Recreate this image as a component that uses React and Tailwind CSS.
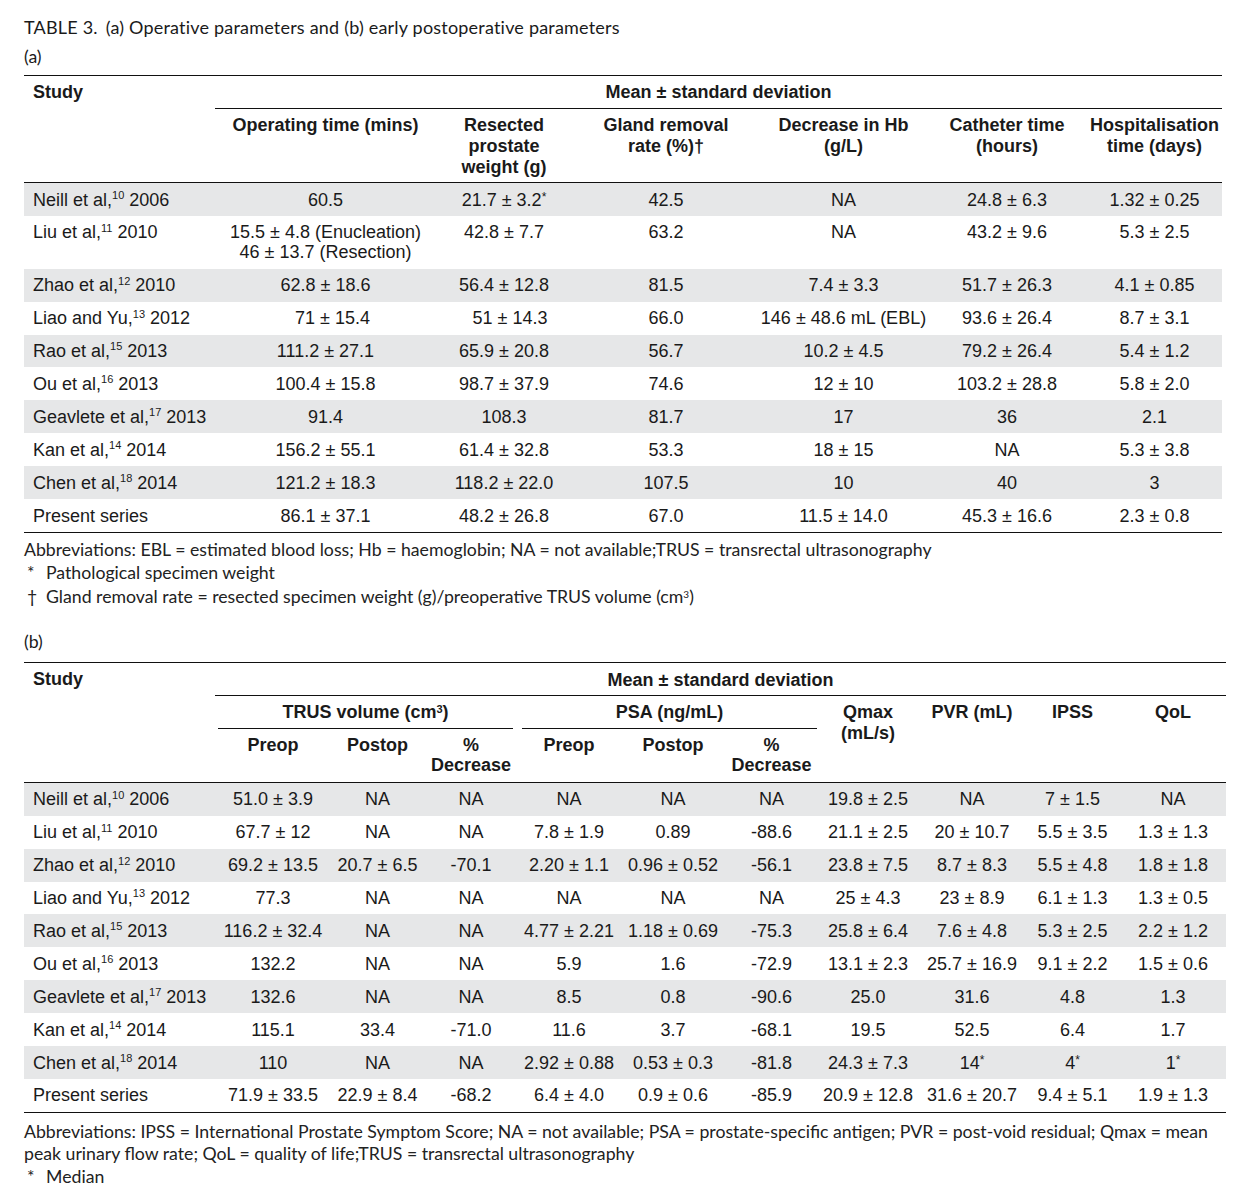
import React from "react";

const cellFont = { fontFamily: '"Liberation Sans", Arial, sans-serif' };
const noteFont = { fontFamily: 'Lato, "Open Sans", sans-serif' };

const Sup = ({ children }) => (
  <sup className="text-[11px] top-[-0.6em]">{children}</sup>
);

const Study = ({ name, ref_, year }) => (
  <span>
    {name}
    {ref_ ? <Sup>{ref_}</Sup> : null}
    {year}
  </span>
);

const rowsA = [
  ["Neill et al,", "10", " 2006", "60.5", "21.7 ± 3.2*", "42.5", "NA", "24.8 ± 6.3", "1.32 ± 0.25"],
  ["Liu et al,", "11", " 2010", ["15.5 ± 4.8 (Enucleation)", "46 ± 13.7 (Resection)"], "42.8 ± 7.7", "63.2", "NA", "43.2 ± 9.6", "5.3 ± 2.5"],
  ["Zhao et al,", "12", " 2010", "62.8 ± 18.6", "56.4 ± 12.8", "81.5", "7.4 ± 3.3", "51.7 ± 26.3", "4.1 ± 0.85"],
  ["Liao and Yu,", "13", " 2012", { v: "71 ± 15.4", s: "pl-[14px]" }, { v: "51 ± 14.3", s: "pl-[12px]" }, "66.0", "146 ± 48.6 mL (EBL)", "93.6 ± 26.4", "8.7 ± 3.1"],
  ["Rao et al,", "15", " 2013", "111.2 ± 27.1", "65.9 ± 20.8", "56.7", "10.2 ± 4.5", "79.2 ± 26.4", "5.4 ± 1.2"],
  ["Ou et al,", "16", " 2013", "100.4 ± 15.8", "98.7 ± 37.9", "74.6", "12 ± 10", "103.2 ± 28.8", "5.8 ± 2.0"],
  ["Geavlete et al,", "17", " 2013", "91.4", "108.3", "81.7", "17", "36", "2.1"],
  ["Kan et al,", "14", " 2014", "156.2 ± 55.1", "61.4 ± 32.8", "53.3", "18 ± 15", "NA", "5.3 ± 3.8"],
  ["Chen et al,", "18", " 2014", "121.2 ± 18.3", "118.2 ± 22.0", "107.5", "10", "40", "3"],
  ["Present series", "", "", "86.1 ± 37.1", "48.2 ± 26.8", "67.0", "11.5 ± 14.0", "45.3 ± 16.6", "2.3 ± 0.8"],
];

const rowsB = [
  ["Neill et al,", "10", " 2006", "51.0 ± 3.9", "NA", "NA", "NA", "NA", "NA", "19.8 ± 2.5", "NA", "7 ± 1.5", "NA"],
  ["Liu et al,", "11", " 2010", "67.7 ± 12", "NA", "NA", "7.8 ± 1.9", "0.89", "-88.6", "21.1 ± 2.5", "20 ± 10.7", "5.5 ± 3.5", "1.3 ± 1.3"],
  ["Zhao et al,", "12", " 2010", "69.2 ± 13.5", "20.7 ± 6.5", "-70.1", "2.20 ± 1.1", "0.96 ± 0.52", "-56.1", "23.8 ± 7.5", "8.7 ± 8.3", "5.5 ± 4.8", "1.8 ± 1.8"],
  ["Liao and Yu,", "13", " 2012", "77.3", "NA", "NA", "NA", "NA", "NA", "25 ± 4.3", "23 ± 8.9", "6.1 ± 1.3", "1.3 ± 0.5"],
  ["Rao et al,", "15", " 2013", "116.2 ± 32.4", "NA", "NA", "4.77 ± 2.21", "1.18 ± 0.69", "-75.3", "25.8 ± 6.4", "7.6 ± 4.8", "5.3 ± 2.5", "2.2 ± 1.2"],
  ["Ou et al,", "16", " 2013", "132.2", "NA", "NA", "5.9", "1.6", "-72.9", "13.1 ± 2.3", "25.7 ± 16.9", "9.1 ± 2.2", "1.5 ± 0.6"],
  ["Geavlete et al,", "17", " 2013", "132.6", "NA", "NA", "8.5", "0.8", "-90.6", "25.0", "31.6", "4.8", "1.3"],
  ["Kan et al,", "14", " 2014", "115.1", "33.4", "-71.0", "11.6", "3.7", "-68.1", "19.5", "52.5", "6.4", "1.7"],
  ["Chen et al,", "18", " 2014", "110", "NA", "NA", "2.92 ± 0.88", "0.53 ± 0.3", "-81.8", "24.3 ± 7.3", "14*", "4*", "1*"],
  ["Present series", "", "", "71.9 ± 33.5", "22.9 ± 8.4", "-68.2", "6.4 ± 4.0", "0.9 ± 0.6", "-85.9", "20.9 ± 12.8", "31.6 ± 20.7", "9.4 ± 5.1", "1.9 ± 1.3"],
];

function Val({ v }) {
  if (Array.isArray(v)) {
    return (
      <>
        {v.map((l, i) => (
          <div key={i}>{l}</div>
        ))}
      </>
    );
  }
  if (typeof v === "string" && v.endsWith("*")) {
    return (
      <span>
        {v.slice(0, -1)}
        <sup className="text-[12px] top-[-0.4em]">*</sup>
      </span>
    );
  }
  return <span>{v}</span>;
}

function BodyRows({ rows }) {
  return rows.map((r, i) => {
    const gray = i % 2 === 0;
    const last = i === rows.length - 1;
    return (
      <tr
        key={i}
        className={
          (gray ? "bg-[#e6e7e8] " : "") + (last ? "border-b border-[#111]" : "")
        }
      >
        <td className="pl-[9px] pt-[6.5px] pb-[6.4px] text-left align-top whitespace-nowrap">
          <Study name={r[0]} ref_={r[1]} year={r[2]} />
        </td>
        {r.slice(3).map((c, j) => {
          const obj = c && typeof c === "object" && !Array.isArray(c);
          const v = obj ? c.v : c;
          const extra = obj ? " " + c.s : "";
          return (
            <td
              key={j}
              className={
                "pt-[6.5px] pb-[6.4px] text-center align-top whitespace-nowrap" + extra
              }
            >
              <Val v={v} />
            </td>
          );
        })}
      </tr>
    );
  });
}

export default function App() {
  return (
    <div className="bg-white w-[1250px] min-h-[1194px] text-[#1a1a1a] pt-[15px] pl-[24px]">
      <div style={noteFont} className="text-[18px] leading-[24px] tracking-[0.2px]">
        TABLE 3.<span className="inline-block w-[8px]"></span>(a) Operative parameters and (b) early postoperative parameters
      </div>
      <div style={noteFont} className="text-[17.7px] leading-[24px] mt-[6px]">
        (a)
      </div>

      <table
        style={cellFont}
        className="table-fixed border-collapse w-[1198px] mt-[6px] text-[18px] leading-[20px]"
      >
        <colgroup>
          <col className="w-[191px]" />
          <col className="w-[221px]" />
          <col className="w-[136px]" />
          <col className="w-[188px]" />
          <col className="w-[167px]" />
          <col className="w-[160px]" />
          <col className="w-[135px]" />
        </colgroup>
        <thead>
          <tr className="border-t border-[#111]">
            <th rowSpan={2} className="pl-[9px] pt-[6px] text-left align-top font-bold">
              Study
            </th>
            <th colSpan={6} className="h-[33px] text-center font-bold border-b border-[#111] align-middle">
              Mean ± standard deviation
            </th>
          </tr>
          <tr className="border-b border-[#111]">
            <th className="pt-[6px] pb-[4px] h-[73px] align-top font-bold leading-[21px]">Operating time (mins)</th>
            <th className="pt-[6px] pb-[4px] align-top font-bold leading-[21px]">
              Resected
              <br />
              prostate
              <br />
              weight (g)
            </th>
            <th className="pt-[6px] pb-[4px] align-top font-bold leading-[21px]">
              Gland removal
              <br />
              rate (%)†
            </th>
            <th className="pt-[6px] pb-[4px] align-top font-bold leading-[21px]">
              Decrease in Hb
              <br />
              (g/L)
            </th>
            <th className="pt-[6px] pb-[4px] align-top font-bold leading-[21px]">
              Catheter time
              <br />
              (hours)
            </th>
            <th className="pt-[6px] pb-[4px] align-top font-bold leading-[21px] whitespace-nowrap">
              Hospitalisation
              <br />
              time (days)
            </th>
          </tr>
        </thead>
        <tbody>
          <BodyRows rows={rowsA} />
        </tbody>
      </table>

      <div style={noteFont} className="text-[17.7px] leading-[23.5px] mt-[5px] text-[#222]">
        <div>
          Abbreviations: EBL = estimated blood loss; Hb = haemoglobin; NA = not available;TRUS = transrectal ultrasonography
        </div>
        <div>
          <span className="inline-block w-[22px] pl-[3px]">*</span>Pathological specimen weight
        </div>
        <div>
          <span className="inline-block w-[22px] pl-[3px]">†</span>Gland removal rate = resected specimen weight (g)/preoperative TRUS volume (cm<sup className="text-[10px]">3</sup>)
        </div>
      </div>

      <div style={noteFont} className="text-[17.7px] leading-[24px] mt-[22px]">
        (b)
      </div>

      <table
        style={cellFont}
        className="table-fixed border-collapse w-[1202px] mt-[8px] text-[18px] leading-[20px]"
      >
        <colgroup>
          <col className="w-[191px]" />
          <col className="w-[116px]" />
          <col className="w-[93px]" />
          <col className="w-[94px]" />
          <col className="w-[102px]" />
          <col className="w-[106px]" />
          <col className="w-[91px]" />
          <col className="w-[102px]" />
          <col className="w-[106px]" />
          <col className="w-[95px]" />
          <col className="w-[106px]" />
        </colgroup>
        <thead>
          <tr className="border-t border-[#111]">
            <th rowSpan={3} className="pl-[9px] pt-[6px] text-left align-top font-bold">
              Study
            </th>
            <th colSpan={10} className="h-[33px] pt-[1px] text-center font-bold border-b border-[#111] align-middle">
              Mean ± standard deviation
            </th>
          </tr>
          <tr>
            <th colSpan={3} className="p-0 align-top font-bold">
              <div className="h-[33px] pt-[6px] ml-[3px] mr-[5px] border-b border-[#111]">
                TRUS volume (cm<sup className="text-[11px]">3</sup>)
              </div>
            </th>
            <th colSpan={3} className="p-0 align-top font-bold">
              <div className="h-[33px] pt-[6px] ml-[4px] border-b border-[#111]">
                PSA (ng/mL)
              </div>
            </th>
            <th rowSpan={2} className="pt-[6px] align-top font-bold leading-[21px]">
              Qmax
              <br />
              (mL/s)
            </th>
            <th rowSpan={2} className="pt-[6px] align-top font-bold">PVR (mL)</th>
            <th rowSpan={2} className="pt-[6px] align-top font-bold">IPSS</th>
            <th rowSpan={2} className="pt-[6px] align-top font-bold">QoL</th>
          </tr>
          <tr className="border-b border-[#111]">
            <th className="h-[53px] pt-[6px] align-top font-bold">Preop</th>
            <th className="pt-[6px] align-top font-bold">Postop</th>
            <th className="pt-[6px] align-top font-bold leading-[20px]">
              %
              <br />
              Decrease
            </th>
            <th className="pt-[6px] align-top font-bold">Preop</th>
            <th className="pt-[6px] align-top font-bold">Postop</th>
            <th className="pt-[6px] align-top font-bold leading-[20px]">
              %
              <br />
              Decrease
            </th>
          </tr>
        </thead>
        <tbody>
          <BodyRows rows={rowsB} />
        </tbody>
      </table>

      <div style={noteFont} className="text-[17.7px] leading-[22.5px] mt-[8px] text-[#222] pr-[40px]">
        <div>
          Abbreviations: IPSS = International Prostate Symptom Score; NA = not available; PSA = prostate-specific antigen; PVR = post-void residual; Qmax = mean peak urinary flow rate; QoL = quality of life;TRUS = transrectal ultrasonography
        </div>
        <div>
          <span className="inline-block w-[22px] pl-[3px]">*</span>Median
        </div>
      </div>
    </div>
  );
}
